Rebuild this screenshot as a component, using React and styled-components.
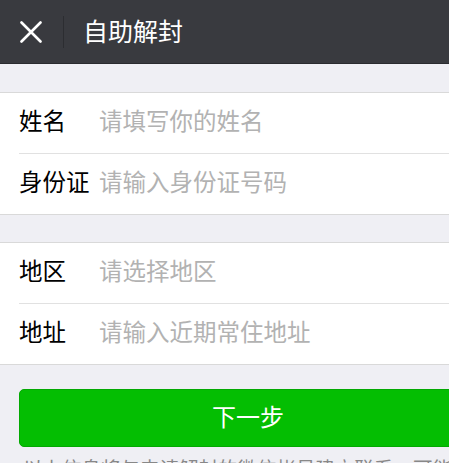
import React from "react"
import styled, { createGlobalStyle } from 'styled-components';

const GlobalStyle = createGlobalStyle`
  html, body {
    margin: 0;
    padding: 0;
    overflow: hidden;
    background: #efeff4;
  }
  body {
    font-family: "Noto Sans CJK SC", "Noto Sans", sans-serif;
  }
`

const Page = styled.div`
  width: 496px;
  height: 463px;
  overflow: hidden;
  background: #efeff4;
`

const Header = styled.div`
  height: 63px;
  background: #393a3f;
  border-bottom: 1px solid #2a2b2f;
  display: flex;
  align-items: center;
`

const CloseButton = styled.div`
  width: 64px;
  height: 32px;
  display: flex;
  align-items: center;
  justify-content: center;
  border-right: 1px solid #2c2d31;
  box-sizing: border-box;
  padding-right: 1px;
`

const Title = styled.h1`
  margin: 0 0 2px 19px;
  color: #fff;
  font-size: 25px;
  font-weight: 400;
  line-height: 1;
`

const Section = styled.div`
  margin-top: ${props => props.$gap}px;
  background: #fff;
  border-top: 1px solid #d9d9d9;
  border-bottom: 1px solid #d9d9d9;
`

const Row = styled.div`
  box-sizing: border-box;
  height: 60px;
  padding-bottom: 5px;
  margin-left: 19px;
  display: flex;
  align-items: center;
  & + & {
    height: 61px;
    border-top: 1px solid #e1e1e1;
  }
`

const Label = styled.div`
  width: 80px;
  font-size: 23.5px;
  line-height: 1;
  color: #000;
  white-space: nowrap;
`

const Placeholder = styled.div`
  font-size: 23.5px;
  line-height: 1;
  color: #b2b2b2;
  white-space: nowrap;
`

const Actions = styled.div`
  padding: 24px 19px 0;
`

const NextButton = styled.div`
  box-sizing: border-box;
  height: 58px;
  padding-bottom: 4px;
  border-radius: 5px;
  background: #04be02;
  border: 1px solid #03a902;
  color: #fff;
  font-size: 24px;
  line-height: 1;
  display: flex;
  align-items: center;
  justify-content: center;
`

const Notice = styled.p`
  margin: 7px 20px 0 23px;
  font-size: 19.5px;
  line-height: 27px;
  color: #888;
`

const fields = [
  [
    { label: "姓名", placeholder: "请填写你的姓名" },
    { label: "身份证", placeholder: "请输入身份证号码" },
  ],
  [
    { label: "地区", placeholder: "请选择地区" },
    { label: "地址", placeholder: "请输入近期常住地址" },
  ],
]

export default function App() {
  return (
    <Page>
      <GlobalStyle />
      <Header>
        <CloseButton>
          <svg width="22" height="22" viewBox="0 0 22 22">
            <path d="M1.5 1.5 L20.5 20.5 M20.5 1.5 L1.5 20.5" stroke="#fff" strokeWidth="2.6" strokeLinecap="round" />
          </svg>
        </CloseButton>
        <Title>自助解封</Title>
      </Header>
      {fields.map((group, i) => (
        <Section key={i} $gap={i === 0 ? 28 : 27}>
          {group.map(item => (
            <Row key={item.label}>
              <Label>{item.label}</Label>
              <Placeholder>{item.placeholder}</Placeholder>
            </Row>
          ))}
        </Section>
      ))}
      <Actions>
        <NextButton>下一步</NextButton>
      </Actions>
      <Notice>以上信息将与申请解封的微信帐号建立联系，可能会用于核实你的身份。</Notice>
    </Page>
  )
}
